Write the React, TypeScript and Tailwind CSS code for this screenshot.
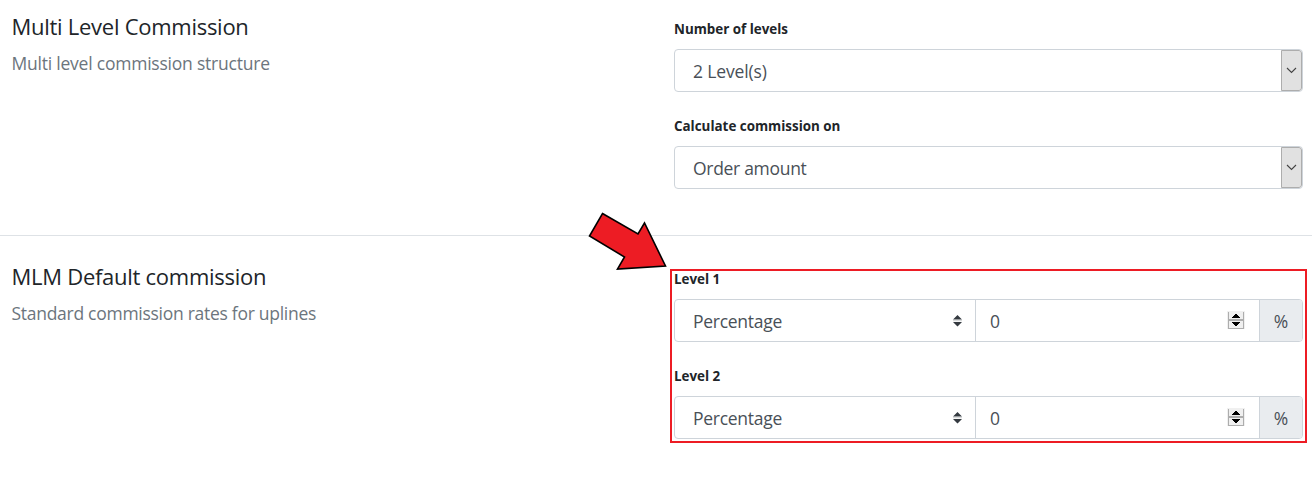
import React from 'react';

function Heading({ title, text, textClass }: { title: string; text: string; textClass: string }) {
  return (
    <div className="-ml-[0.5px] w-[662.5px] shrink-0 whitespace-nowrap">
      <h2 className="flex h-[30px] items-center text-[#212529]">
        <span className="text-[22px] tracking-[-0.27px]">{title}</span>
      </h2>
      <p className="mt-2 flex h-7 items-center text-[#6c757d]">
        <span className={textClass}>{text}</span>
      </p>
    </div>
  );
}

function Label({ children }: { children: React.ReactNode }) {
  return (
    <div className="mb-[10px] flex h-5 items-center whitespace-nowrap font-bold text-[#212529]">
      <span className="text-[13.4px]">{children}</span>
    </div>
  );
}

function SelectBox({ value, className }: { value: string; className: string }) {
  return (
    <div className="flex h-[43px] w-full overflow-hidden rounded-[4px] border border-[#ced4da] bg-white">
      <div className="flex flex-1 items-center pt-0.5 pl-[18px] text-[#495057]">
        <span className={className}>{value}</span>
      </div>
      <div className="flex w-[21px] items-center justify-center rounded-r-[3px] border border-[#adadad] bg-[#e1e1e1]">
        <svg width="11" height="7" viewBox="0 0 11 7" fill="none">
          <path d="M1 1L5.5 5.5L10 1" stroke="#444" strokeWidth="1.1" />
        </svg>
      </div>
    </div>
  );
}

function Spinner() {
  return (
    <svg width="18" height="19" viewBox="0 0 18 19" shapeRendering="crispEdges">
      <rect width="18" height="18" fill="#f0f0f0" />
      <path d="M1 1h1v17h-1zM16 1h1v17h-1zM1 8h16v2h-16zM1 17h16v1h-16z" fill="#adadad" />
      <path d="M8 3h2v1h1v1h1v1h1v1h-8v-1h1v-1h1v-1h1z" fill="#000" />
      <path d="M5 11h8v1h-1v1h-1v1h-1v1h-2v-1h-1v-1h-1v-1h-1z" fill="#000" />
    </svg>
  );
}

function RateGroup() {
  return (
    <div className="flex h-[43px] w-full overflow-hidden rounded-[4px] border border-[#ced4da] bg-white text-[#495057]">
      <div className="flex w-[301px] items-center justify-between border-r border-[#ced4da] pr-[13px] pl-[18px]">
        <span className="pt-0.5 text-[17.5px] tracking-[-0.28px]">Percentage</span>
        <svg width="10" height="12" viewBox="0 0 10 12">
          <path d="M5.5 0L10 4.5H1ZM5.5 11.5L1 7H10Z" fill="#343a40" />
          <path d="M1 5.7h9" stroke="#343a40" strokeOpacity="0.4" strokeWidth="0.6" />
        </svg>
      </div>
      <div className="flex flex-1 items-center justify-between pr-[14px] pl-[14px]">
        <span className="pt-0.5 text-[17.5px]">0</span>
        <Spinner />
      </div>
      <div className="flex w-[43px] items-center justify-center border-l border-[#ced4da] bg-[#e9ecef] pt-0.5">
        <span className="text-[17.5px]">%</span>
      </div>
    </div>
  );
}

export default function App() {
  return (
    <main className="relative h-[478px] w-[1312px] overflow-hidden bg-white font-['Open_Sans','Noto_Sans',sans-serif]">
      <section className="flex h-[236px] border-b border-[#dee2e6] pt-[11px] pl-3">
        <Heading
          title="Multi Level Commission"
          text="Multi level commission structure"
          textClass="text-[17.5px] tracking-[-0.22px]"
        />
        <div className="w-[629px] pt-2">
          <Label>Number of levels</Label>
          <SelectBox value="2 Level(s)" className="text-[17.5px] tracking-[-0.15px]" />
          <div className="h-6" />
          <Label>Calculate commission on</Label>
          <SelectBox value="Order amount" className="text-[17.5px] tracking-[-0.3px]" />
        </div>
      </section>
      <section className="flex pt-[25px] pl-3">
        <Heading
          title="MLM Default commission"
          text="Standard commission rates for uplines"
          textClass="text-[17.5px] tracking-[-0.28px]"
        />
        <div className="w-[629px] pt-2">
          <Label>Level 1</Label>
          <RateGroup />
          <div className="h-6" />
          <Label>Level 2</Label>
          <RateGroup />
        </div>
      </section>
      <div className="pointer-events-none absolute top-[269px] left-[670px] h-[174px] w-[637px] border-2 border-[#ed1c24]" />
      <svg className="pointer-events-none absolute top-[210px] left-[584px]" width="84" height="64" viewBox="0 0 84 64">
        <path d="M18.5 3.5L54 24L60.5 13L81.5 56L33.5 59L40.5 47L5.5 26Z" fill="#ed1c24" stroke="#000" strokeWidth="1.6" />
      </svg>
    </main>
  );
}
